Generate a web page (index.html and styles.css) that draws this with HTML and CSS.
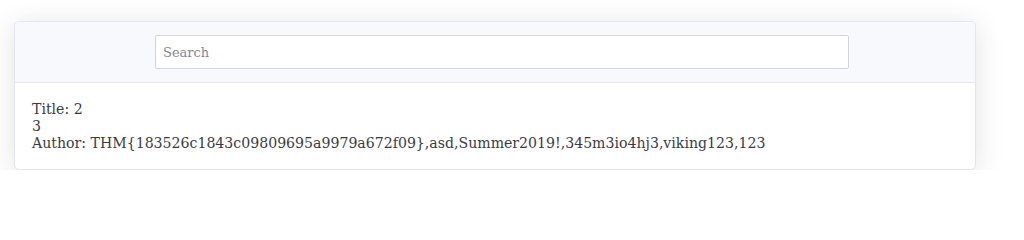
FILE: index.html
```html
<!DOCTYPE html>
<html>
<head>
<meta charset="utf-8">
<link rel="stylesheet" href="styles.css">
</head>
<body>
<div class="card">
  <div class="card-header">
    <input class="search" type="text" placeholder="Search">
  </div>
  <div class="card-body">
    <div class="line">Title: 2</div>
    <div class="line">3</div>
    <div class="line">Author: THM{183526c1843c09809695a9979a672f09},asd,Summer2019!,345m3io4hj3,viking123,123</div>
  </div>
</div>
</body>
</html>
```
FILE: styles.css
```css
html, body {
  margin: 0;
  padding: 0;
  background: #fff;
}
body {
  padding: 21px 48px 0 14px;
  font-family: "DejaVu Serif", serif;
  color: #3a3b45;
}
.card {
  width: 960px;
  border: 1px solid #e3e6f0;
  border-radius: 5px;
  background: #fff;
  box-shadow: 0 4px 28px rgba(58, 59, 69, 0.14);
  overflow: hidden;
}
.card-header {
  background: #f8f9fc;
  border-bottom: 1px solid #e3e6f0;
  padding: 13px 126px 13px 140px;
  display: flex;
}
.search {
  flex: 1;
  height: 34px;
  box-sizing: border-box;
  border: 1px solid #d1d3e2;
  border-radius: 2px;
  padding: 0 7px;
  font-family: "DejaVu Serif", serif;
  font-size: 13px;
  color: #6e707e;
  background: #fff;
  outline: none;
}
.search::placeholder {
  color: #858796;
}
.card-body {
  padding: 18px 17px 17px 17px;
  font-size: 14.12px;
  line-height: 17px;
}
```
